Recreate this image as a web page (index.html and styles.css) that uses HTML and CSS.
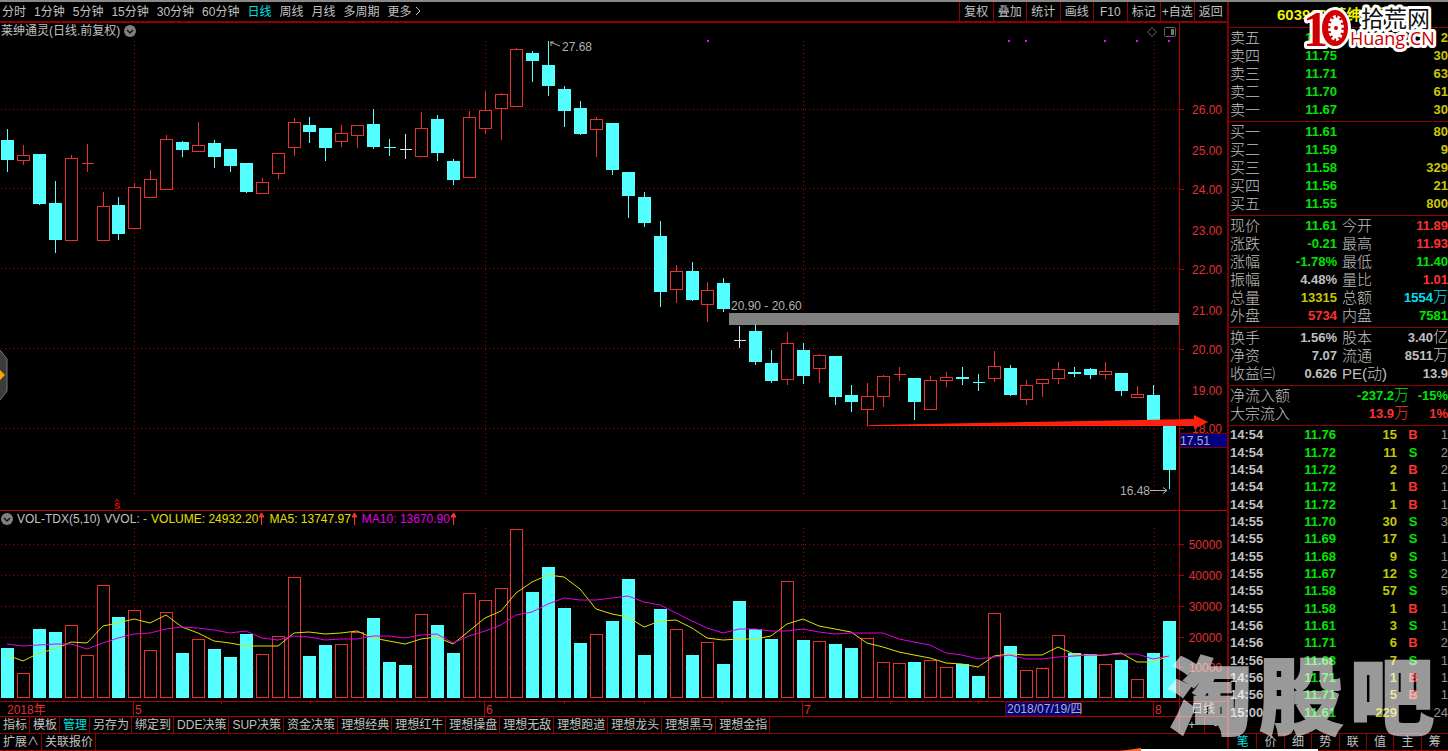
FILE: index.html
```
<!DOCTYPE html>
<html lang="zh-CN">
<head>
  <meta charset="UTF-8">
  <meta name="viewport" content="width=device-width, initial-scale=1.0">
  <title>莱绅通灵 日线</title>
  <link rel="stylesheet" href="styles.css">
</head>
<body>
  <div class="app">
    <main class="main">
      <div class="toolbar">
        <nav class="periods">
          <button>分时</button>
          <button>1分钟</button>
          <button>5分钟</button>
          <button>15分钟</button>
          <button>30分钟</button>
          <button>60分钟</button>
          <button class="active">日线</button>
          <button>周线</button>
          <button>月线</button>
          <button>多周期</button>
          <button>更多
            <svg width="6" height="10" viewBox="0 0 6 10"><path d="M1 1l4 4-4 4" fill="none" stroke="currentColor"/></svg>
          </button>
        </nav>
        <div class="tools">
          <button>复权</button>
          <button>叠加</button>
          <button>统计</button>
          <button>画线</button>
          <button>F10</button>
          <button>标记</button>
          <button>+自选</button>
          <button>返回</button>
        </div>
      </div>

      <section class="panel">
        <div class="panel-title">
          <span>莱绅通灵(日线.前复权)</span>
          <svg width="12" height="12" viewBox="0 0 12 12"><circle cx="6" cy="6" r="6" fill="#808080"/><path d="M3 5l3 3 3-3" fill="none" stroke="#111" stroke-width="1.5"/></svg>
        </div>
        <svg id="price-chart" class="chart" viewBox="0 23 1227 487"></svg>
        <button class="handle" aria-label="展开">
          <svg width="8" height="50" viewBox="0 0 8 50"><path d="M0 0l7 9v32l-7 9z" fill="#3c3c3c"/><path d="M0 0l7 9v32l-7 9" fill="none" stroke="#777"/><path d="M0 20l5 5-5 5z" fill="#f5a800"/></svg>
        </button>
      </section>

      <section class="panel">
        <div class="panel-title">
          <svg width="12" height="12" viewBox="0 0 12 12"><circle cx="6" cy="6" r="6" fill="#808080"/><path d="M3 5l3 3 3-3" fill="none" stroke="#111" stroke-width="1.5"/></svg>
          <span>VOL-TDX(5,10)</span>
          <span>VVOL: -</span>
          <span class="volume">VOLUME: 24932.20<svg class="up" viewBox="0 0 5 12"><path d="M2.5 12V2M0 4l2.5-4L5 4z"/></svg></span>
          <span class="ma5">MA5: 13747.97<svg class="up" viewBox="0 0 5 12"><path d="M2.5 12V2M0 4l2.5-4L5 4z"/></svg></span>
          <span class="ma10">MA10: 13670.90<svg class="up" viewBox="0 0 5 12"><path d="M2.5 12V2M0 4l2.5-4L5 4z"/></svg></span>
        </div>
        <svg id="volume-chart" class="chart" viewBox="0 511 1227 205"></svg>
      </section>

      <div class="tabs">
        <button>指标</button>
        <button>模板</button>
        <button class="active">管理</button>
        <button>另存为</button>
        <button>绑定到</button>
        <button>DDE决策</button>
        <button>SUP决策</button>
        <button>资金决策</button>
        <button>理想经典</button>
        <button>理想红牛</button>
        <button>理想操盘</button>
        <button>理想无敌</button>
        <button>理想跑道</button>
        <button>理想龙头</button>
        <button>理想黑马</button>
        <button>理想金指</button>
        <div class="scale">
          <button>+</button>
          <button>-</button>
        </div>
      </div>
      <div class="tabs">
        <button>扩展∧</button>
        <button>关联报价</button>
      </div>
    </main>

    <aside class="quote">
      <h1>603900 莱绅通灵</h1>

      <table class="book">
        <tr><th>卖五</th><td class="down">11.76</td><td class="qty">2</td></tr>
        <tr><th>卖四</th><td class="down">11.75</td><td class="qty">30</td></tr>
        <tr><th>卖三</th><td class="down">11.71</td><td class="qty">63</td></tr>
        <tr><th>卖二</th><td class="down">11.70</td><td class="qty">61</td></tr>
        <tr><th>卖一</th><td class="down">11.67</td><td class="qty">30</td></tr>
      </table>
      <table class="book">
        <tr><th>买一</th><td class="down">11.61</td><td class="qty">80</td></tr>
        <tr><th>买二</th><td class="down">11.59</td><td class="qty">9</td></tr>
        <tr><th>买三</th><td class="down">11.58</td><td class="qty">329</td></tr>
        <tr><th>买四</th><td class="down">11.56</td><td class="qty">21</td></tr>
        <tr><th>买五</th><td class="down">11.55</td><td class="qty">800</td></tr>
      </table>
      <table class="stats">
        <tr><th>现价</th><td class="down">11.61</td><th>今开</th><td class="rise">11.89</td></tr>
        <tr><th>涨跌</th><td class="down">-0.21</td><th>最高</th><td class="rise">11.93</td></tr>
        <tr><th>涨幅</th><td class="down">-1.78%</td><th>最低</th><td class="down">11.40</td></tr>
        <tr><th>振幅</th><td>4.48%</td><th>量比</th><td class="rise">1.01</td></tr>
        <tr><th>总量</th><td class="qty">13315</td><th>总额</th><td class="amount">1554<span class="unit">万</span></td></tr>
        <tr><th>外盘</th><td class="rise">5734</td><th>内盘</th><td class="down">7581</td></tr>
      </table>
      <table class="stats">
        <tr><th>换手</th><td>1.56%</td><th>股本</th><td>3.40<span class="unit">亿</span></td></tr>
        <tr><th>净资</th><td>7.07</td><th>流通</th><td>8511<span class="unit">万</span></td></tr>
        <tr><th>收益㈢</th><td>0.626</td><th>PE(动)</th><td>13.9</td></tr>
      </table>
      <table class="flow">
        <tr><th>净流入额</th><td class="down">-237.2<span class="unit">万</span></td><td class="down">-15%</td></tr>
        <tr><th>大宗流入</th><td class="rise">13.9<span class="unit">万</span></td><td class="rise">1%</td></tr>
      </table>
      <div class="ticks">
        <table>
          <tbody id="ticks"></tbody>
        </table>
      </div>
      <div class="quote-tabs">
        <button class="active">笔</button>
        <button>价</button>
        <button>细</button>
        <button>势</button>
        <button>联</button>
        <button>值</button>
        <button>主</button>
        <button>筹</button>
      </div>
    </aside>

    <svg class="logo" width="136" height="52" viewBox="1304 2 136 52">
      <ellipse cx="1335" cy="28" rx="16" ry="21" fill="#fff"/>
      <text x="1303" y="46" class="logo-one">1</text>
      <text x="1361" y="27" class="logo-cn">拾荒网</text>
      <text x="1350" y="45" class="logo-en">Huang.CN</text>
      <ellipse cx="1335" cy="28" rx="13" ry="18" fill="#d00000"/>
      <ellipse cx="1336" cy="28" rx="8" ry="13" fill="#fff"/>
      <ellipse cx="1336" cy="28" rx="7" ry="12" fill="none" stroke="#d00000" stroke-width="3" stroke-dasharray="2 3"/>
      <circle cx="1336" cy="28" r="2" fill="#d00000"/>
    </svg>

    <div class="watermark"><span>淘</span><span>股</span><span>吧</span></div>
    <svg class="popup-edge" width="198" height="3" viewBox="0 0 198 3"><path d="M0 3L21 0v3z" fill="#ff6a32"/><path d="M21 1h177v2H21z" fill="#fff"/></svg>
  </div>
  <script src="chart.js"></script>
</body>
</html>
```
FILE: styles.css
```
* {
  box-sizing: border-box;
}
body {
  margin: 0;
  background: #000;
  color: #c0c0c0;
  font-family: "Liberation Sans", "Noto Sans CJK SC", sans-serif;
  font-size: 12px;
}
button {
  padding: 0;
  border: none;
  background: none;
  color: inherit;
  font: inherit;
  line-height: 16px;
  white-space: nowrap;
  cursor: pointer;
}
.app {
  position: relative;
  display: flex;
  min-height: 100vh;
  border-top: 2px solid #888;
  overflow: hidden;
}
.main {
  flex: 1;
  min-width: 0;
}

/* Toolbar */
.toolbar {
  display: flex;
  justify-content: space-between;
  height: 21px;
  border-bottom: 2px solid #900000;
}
.periods {
  display: flex;
  gap: 8px;
  padding-left: 2px;
}
.tools {
  display: grid;
  grid-template-columns: repeat(8, 1fr);
  width: 268px;
}
.tools button {
  border-left: 1px solid #900000;
}
.active {
  color: #00e0e0;
}

/* Charts */
.panel {
  position: relative;
  border-bottom: 1px solid #b00000;
}
.panel-title {
  position: absolute;
  top: 0;
  left: 1px;
  display: flex;
  align-items: center;
  gap: 4px;
  line-height: 16px;
}
.chart {
  display: block;
  width: 100%;
  height: auto;
  font-size: 12px;
}
.volume,
.ma5 {
  color: #e0e000;
}
.ma10 {
  color: #e000e0;
}
.up {
  width: 5px;
  height: 12px;
  margin: 0 1px;
  vertical-align: -2px;
  fill: #ff3232;
  stroke: #ff3232;
}
.handle {
  position: absolute;
  top: 327px;
  left: 0;
  height: 50px;
}
.handle svg {
  display: block;
}
.grid {
  stroke: #b00000;
  stroke-dasharray: 1 3;
}
.axis {
  stroke: #b00000;
}
.axis-label {
  fill: #e03030;
}
.note {
  fill: #b0b0b0;
}
.note-line {
  fill: none;
  stroke: #b0b0b0;
}
.line {
  fill: none;
  stroke-width: 1;
}
.icon {
  fill: none;
  stroke: #666;
}

/* Bottom tabs */
.tabs {
  display: flex;
  height: 17px;
  border-bottom: 1px solid #900000;
}
.tabs > button {
  padding: 0 2px 0 3px;
  border-right: 1px solid #900000;
}
.scale {
  display: grid;
  grid-template-columns: 1fr 1fr;
  width: 48px;
  margin-left: auto;
  border-left: 1px solid #900000;
}
.scale button + button {
  border-left: 1px solid #900000;
}

/* Quote sidebar */
.quote {
  display: flex;
  flex-direction: column;
  width: 221px;
  border-left: 2px solid #800000;
}
.quote h1 {
  height: 26px;
  margin: 0;
  padding-left: 48px;
  border-bottom: 1px solid #900000;
  color: #f0f000;
  font-size: 15px;
  line-height: 26px;
}
.quote table {
  width: 100%;
  border-spacing: 0;
  table-layout: fixed;
}
.book,
.stats,
.flow {
  padding: 1px 0 2px;
  border-bottom: 1px solid #900000;
}
.quote th,
.quote td {
  height: 18px;
  padding: 0;
  line-height: 18px;
  white-space: nowrap;
}
.quote th {
  padding-left: 1px;
  font-size: 15px;
  font-weight: 300;
  text-align: left;
}
.quote td {
  font-size: 13px;
  font-weight: bold;
  text-align: right;
}
.unit {
  font-size: 15px;
  font-weight: 300;
  line-height: 16px;
}
.book th,
.stats th:first-child {
  width: 46px;
}
.book td:nth-child(2),
.stats td:nth-child(2) {
  width: 62px;
}
.stats th:nth-child(3) {
  width: 48px;
  padding-left: 5px;
}
.flow th {
  width: 107px;
}
.flow td:nth-child(2) {
  width: 73px;
}
.ticks {
  flex: 1;
}
.ticks table {
  height: 295px;
}
.quote .ticks td {
  height: 17px;
  line-height: 17px;
}
.quote .ticks .time {
  width: 46px;
  padding-left: 1px;
  text-align: left;
}
.ticks .price {
  width: 61px;
}
.ticks .qty {
  width: 61px;
}
.quote .ticks .side {
  width: 32px;
  text-align: center;
}
.quote .ticks .count {
  color: #909090;
  font-weight: normal;
}
.quote .down {
  color: #00e600;
}
.quote .rise {
  color: #ff3232;
}
.quote .qty {
  color: #c8c800;
}
.quote .amount {
  color: #00e0f0;
}
.quote-tabs {
  display: grid;
  grid-template-columns: repeat(8, 1fr);
  height: 18px;
  border-top: 1px solid #900000;
  border-bottom: 1px solid #900000;
}
.quote-tabs button + button {
  border-left: 1px solid #900000;
}

/* Overlays */
.logo {
  position: absolute;
  top: 0;
  right: 8px;
  overflow: visible;
}
.logo text {
  stroke: #fff;
  stroke-width: 6px;
  stroke-linejoin: round;
  paint-order: stroke;
}
.logo-one {
  fill: #d00000;
  font: bold 50px "Liberation Serif", serif;
}
.logo-cn {
  fill: #111;
  font: 23px "Noto Sans CJK SC", sans-serif;
}
.logo-en {
  fill: #d00000;
  font: 18px "Open Sans", sans-serif;
}
.watermark {
  position: absolute;
  right: 14px;
  bottom: 17px;
  display: flex;
  gap: 7px;
  color: #fff;
  font-family: "Noto Sans CJK SC", sans-serif;
  font-size: 84px;
  font-weight: 900;
  line-height: 84px;
  -webkit-text-stroke: 2px #fff;
  opacity: 0.6;
  pointer-events: none;
}
.popup-edge {
  position: absolute;
  right: 130px;
  bottom: 0;
}
```
FILE: chart.js
```
const CYAN = "#54ffff";
const RED = "#e83030";
const WHITE = "#e0e0e0";

// [high, top, bottom, low, type, volume top]
// c = falling, r = rising, w = unchanged
const bars = [
  [129, 140, 160, 172, "c", 648], [145, 155, 160, 165, "r", 673], [154, 154, 204, 205, "c", 629],
  [181, 203, 240, 253, "c", 632], [155, 158, 240, 240, "r", 625], [144, 163, 163, 172, "r", 655],
  [192, 206, 240, 240, "r", 585], [197, 205, 234, 240, "c", 617], [183, 187, 228, 228, "r", 610],
  [170, 179, 197, 197, "r", 650], [135, 139, 189, 189, "r", 612], [141, 142, 150, 157, "c", 653],
  [122, 145, 151, 151, "r", 639], [140, 143, 157, 168, "c", 649], [149, 149, 166, 172, "c", 657],
  [163, 163, 192, 193, "c", 634], [178, 182, 193, 193, "r", 654], [153, 153, 173, 179, "r", 636],
  [118, 122, 147, 156, "r", 577], [117, 125, 132, 143, "c", 656], [128, 128, 148, 161, "c", 645],
  [125, 133, 141, 147, "r", 644], [125, 125, 135, 148, "r", 632], [109, 124, 147, 149, "c", 618],
  [139, 147, 147, 156, "c", 662], [134, 149, 149, 159, "w", 665], [112, 128, 156, 156, "r", 614],
  [115, 119, 153, 161, "c", 625], [159, 161, 180, 185, "c", 653], [111, 117, 177, 177, "r", 593],
  [91, 110, 128, 134, "r", 600], [93, 94, 108, 140, "r", 588], [48, 49, 106, 106, "r", 529],
  [51, 53, 61, 82, "c", 592], [41, 65, 86, 96, "c", 567], [86, 89, 111, 127, "c", 608],
  [101, 108, 134, 135, "c", 643], [117, 119, 129, 157, "r", 634], [123, 123, 170, 175, "c", 621],
  [172, 172, 196, 218, "c", 579], [192, 197, 223, 227, "c", 655], [221, 236, 292, 307, "c", 609],
  [265, 271, 289, 303, "r", 629], [262, 271, 300, 301, "c", 655], [282, 290, 304, 322, "r", 642],
  [278, 283, 309, 312, "c", 664], [326, 340, 340, 348, "w", 601], [324, 331, 362, 365, "c", 629],
  [350, 363, 381, 383, "c", 639], [332, 343, 379, 385, "r", 581], [343, 350, 376, 384, "c", 640],
  [354, 355, 368, 383, "r", 641], [356, 356, 397, 405, "c", 644], [385, 395, 402, 412, "c", 648],
  [383, 396, 409, 427, "r", 638], [375, 376, 396, 407, "r", 662], [367, 374, 374, 381, "r", 663],
  [378, 378, 402, 420, "c", 662], [376, 380, 409, 409, "r", 660], [372, 377, 380, 387, "r", 667],
  [367, 377, 379, 385, "c", 664], [374, 382, 382, 391, "c", 676], [351, 366, 378, 382, "r", 613],
  [365, 368, 395, 396, "c", 646], [380, 385, 399, 405, "r", 670], [379, 379, 383, 397, "r", 668],
  [362, 369, 378, 384, "r", 635], [367, 372, 374, 377, "c", 653], [368, 369, 375, 379, "c", 654],
  [362, 371, 374, 379, "r", 664], [373, 373, 391, 396, "c", 660], [386, 394, 397, 398, "r", 679],
  [385, 395, 420, 420, "c", 653], [425, 425, 470, 489, "c", 621]
];

const ma5 = [655, 661, 653, 649, 642, 643, 626, 623, 619, 623, 615, 627, 633, 641, 643, 646, 646, 646, 633,
  632, 634, 633, 631, 638, 641, 644, 639, 637, 644, 631, 618, 611, 593, 582, 575, 577, 589, 609, 614, 617, 627,
  621, 620, 628, 638, 640, 639, 639, 636, 624, 619, 626, 629, 632, 643, 647, 652, 655, 658, 663, 664, 667, 656,
  654, 655, 655, 647, 654, 656, 655, 653, 662, 662, 656];
const ma10 = [644, 646, 645, 644, 644, 649, 643, 638, 634, 633, 629, 627, 628, 630, 633, 631, 638, 640, 636,
  637, 640, 639, 639, 636, 636, 638, 635, 634, 643, 636, 631, 625, 615, 612, 604, 598, 600, 600, 598, 596, 602,
  605, 613, 621, 628, 633, 629, 629, 631, 631, 629, 632, 634, 633, 633, 633, 639, 642, 645, 653, 655, 659, 657,
  655, 659, 659, 657, 656, 655, 655, 654, 654, 659, 656];

const months = [[134, "5"], [485, "6"], [803, "7"], [1154, "8"]];

function barX(i) {
  return Math.round(7 + 15.92 * i);
}

function line(x1, y1, x2, y2, cls) {
  return `<line x1="${x1}" y1="${y1}" x2="${x2}" y2="${y2}" class="${cls}"/>`;
}

function text(x, y, label, cls, anchor = "start") {
  return `<text x="${x}" y="${y}" class="${cls}" text-anchor="${anchor}">${label}</text>`;
}

function box(x, top, bottom, type) {
  if (type === "r") {
    return `<rect x="${x - 5.5}" y="${top + 0.5}" width="12" height="${bottom - top}" fill="#000" stroke="${RED}"/>`;
  }
  return `<rect x="${x - 6}" y="${top}" width="13" height="${bottom - top}" fill="${CYAN}"/>`;
}

function drawPrice() {
  let out = "";
  for (const y of [109, 188, 268, 348, 428]) out += line(1, y + 0.5, 1179, y + 0.5, "grid");
  for (const [x] of months) out += line(x + 0.5, 41, x + 0.5, 496, "grid");

  // Price gap
  out += `<rect x="729" y="313" width="450" height="12" fill="#808080"/>`;
  out += text(731, 310, "20.90 - 20.60", "note");

  bars.forEach(([high, top, bottom, low, type], i) => {
    const x = barX(i);
    const color = type === "c" ? CYAN : type === "r" ? RED : WHITE;
    out += `<path d="M${x + 0.5} ${high}V${low}" stroke="${color}"/>`;
    if (top === bottom) {
      out += `<path d="M${x - 5} ${top + 0.5}h12" stroke="${color}"/>`;
    } else {
      out += box(x, top, bottom, type);
    }
  });

  for (const x of [708, 1009, 1026, 1105, 1137, 1169]) {
    out += `<rect x="${x - 1}" y="40" width="2" height="2" fill="#ff00ff"/>`;
  }

  // High and low notes
  out += text(562, 51, "27.68", "note") + `<path d="M560 46l-10-4m1 4v-4h3" class="note-line"/>`;
  out += text(1120, 495, "16.48", "note") + `<path d="M1150 490.500h17m-4-3l4 3-4 3" class="note-line"/>`;
  out += `<path d="M115 502l2-3 2 3" fill="none" stroke="#ff0000"/>`;
  out += `<text x="117" y="509" fill="#ff0000" font-size="9" font-weight="bold" text-anchor="middle">S</text>`;

  // Axis
  out += line(1179.5, 23, 1179.5, 510, "axis");
  [109, 150, 189, 230, 269, 310, 349, 390, 428].forEach((y, i) => {
    out += line(1179, y + 0.5, i % 2 ? 1181 : 1184, y + 0.5, "axis");
    out += text(1222, y + 5, (26 - i).toFixed(2), "axis-label", "end");
  });
  out += `<rect x="1180" y="433.500" width="48" height="14" fill="#000080" stroke="#800000"/>`;
  out += text(1180, 445, "17.51", "note");
  out += `<path d="M1152 27.500l4.500 4.500-4.500 4.500-4.500-4.500z" class="icon"/>`;
  out += `<rect x="1164.500" y="27.500" width="11" height="9" rx="1" class="icon"/><path d="M1171 29h3v6h-3z" fill="#777"/>`;

  // Support line
  out += `<path d="M869 425L1194 419V415L1208 422L1194 429V426L869 426z" fill="#ff2010"/>`;
  document.getElementById("price-chart").innerHTML = out;
}

function drawVolume() {
  let out = "";
  const levels = [544, 575, 606, 637, 667];
  for (const y of levels) out += line(1, y + 0.5, 1179, y + 0.5, "grid");
  for (const [x] of months) out += line(x + 0.5, 528, x + 0.5, 698, "grid");

  bars.forEach((bar, i) => {
    out += box(barX(i), bar[5], bar[4] === "r" ? 697 : 698, bar[4]);
  });

  const points = values => values.map((y, i) => `${barX(i)},${y}`).join(" ");
  out += `<polyline points="${points(ma5)}" class="line" stroke="#e0e000"/>`;
  out += `<polyline points="${points(ma10)}" class="line" stroke="#e000e0"/>`;

  out += line(1179.5, 511, 1179.5, 716, "axis");
  out += line(0, 701.5, 1227, 701.5, "axis");
  levels.forEach((y, i) => {
    out += line(1179, y + 0.5, 1184, y + 0.5, "axis");
    out += text(1222, y + 5, 50000 - i * 10000, "axis-label", "end");
  });

  // Dates
  for (const x of [221, 310, 564, 644, 722, 890, 978]) out += line(x + 0.5, 702, x + 0.5, 704, "axis");
  for (const [x, label] of months) {
    out += line(x - 0.5, 702, x - 0.5, 716, "axis") + text(x + 1, 714, label, "axis-label");
  }
  out += text(7, 714, "2018年", "axis-label");
  out += `<rect x="1005.500" y="702" width="75" height="14" fill="#000080" stroke="#800000"/>`;
  out += text(1007, 713, "2018/07/19/四", "note");
  out += text(1203, 713, "日线", "note", "middle");
  document.getElementById("volume-chart").innerHTML = out;
}

const ticks = [
  ["14:54", "11.76", 15, "B", 1],
  ["14:54", "11.72", 11, "S", 2],
  ["14:54", "11.72", 2, "B", 2],
  ["14:54", "11.72", 1, "B", 1],
  ["14:54", "11.72", 1, "B", 1],
  ["14:55", "11.70", 30, "S", 3],
  ["14:55", "11.69", 17, "S", 1],
  ["14:55", "11.68", 9, "S", 1],
  ["14:55", "11.67", 12, "S", 2],
  ["14:55", "11.58", 57, "S", 5],
  ["14:55", "11.58", 1, "B", 1],
  ["14:56", "11.61", 3, "S", 1],
  ["14:56", "11.71", 6, "B", 2],
  ["14:56", "11.68", 7, "S", 1],
  ["14:56", "11.71", 1, "B", 1],
  ["14:56", "11.71", 5, "B", 1],
  ["15:00", "11.61", 229, "", 24]
];

document.getElementById("ticks").innerHTML = ticks.map(([time, price, qty, side, count]) => `
  <tr>
    <td class="time">${time}</td>
    <td class="price down">${price}</td>
    <td class="qty">${qty}</td>
    <td class="side ${side === "B" ? "rise" : "down"}">${side}</td>
    <td class="count">${count}</td>
  </tr>`).join("");

drawPrice();
drawVolume();
```
